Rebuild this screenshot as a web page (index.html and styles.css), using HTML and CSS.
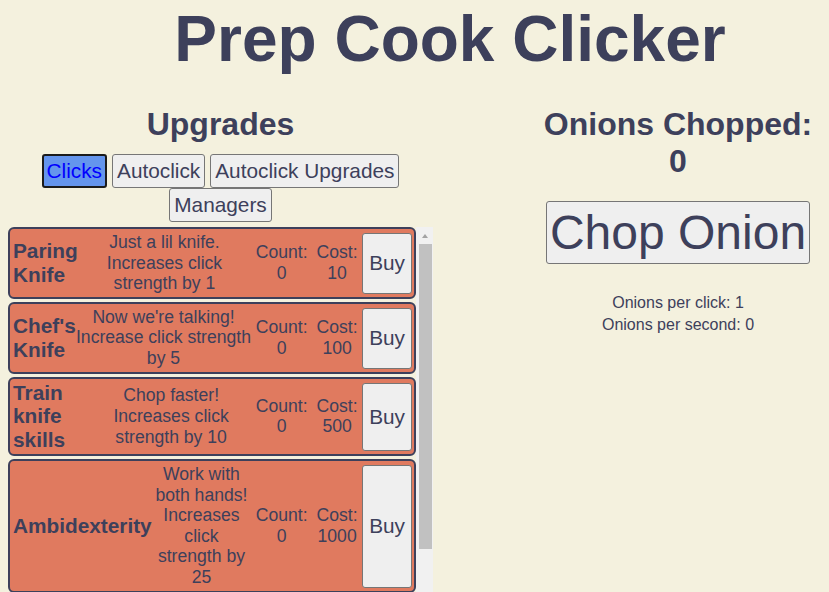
FILE: index.html
```html
<!DOCTYPE html>
<html lang="en">
<head>
<meta charset="utf-8">
<title>Prep Cook Clicker</title>
<link rel="stylesheet" href="styles.css">
</head>
<body>
<h1 class="title">Prep Cook Clicker</h1>
<main class="layout">
  <section class="upgrades">
    <h2 class="heading">Upgrades</h2>
    <nav class="tabs">
      <button class="tab tab-active">Clicks</button>
      <button class="tab">Autoclick</button>
      <button class="tab">Autoclick Upgrades</button>
      <button class="tab">Managers</button>
    </nav>
    <div class="upgrade-pane">
      <div class="upgrade-list">
        <div class="upgrade">
          <div class="upgrade-name">Paring Knife</div>
          <div class="upgrade-desc">Just a lil knife. Increases click strength by 1</div>
          <div class="upgrade-stat">Count:<br>0</div>
          <div class="upgrade-stat">Cost:<br>10</div>
          <button class="buy">Buy</button>
        </div>
        <div class="upgrade">
          <div class="upgrade-name">Chef's Knife</div>
          <div class="upgrade-desc">Now we're talking! Increase click strength by 5</div>
          <div class="upgrade-stat">Count:<br>0</div>
          <div class="upgrade-stat">Cost:<br>100</div>
          <button class="buy">Buy</button>
        </div>
        <div class="upgrade">
          <div class="upgrade-name">Train knife skills</div>
          <div class="upgrade-desc">Chop faster! Increases click strength by 10</div>
          <div class="upgrade-stat">Count:<br>0</div>
          <div class="upgrade-stat">Cost:<br>500</div>
          <button class="buy">Buy</button>
        </div>
        <div class="upgrade">
          <div class="upgrade-name">Ambidexterity</div>
          <div class="upgrade-desc">Work with both hands! Increases click strength by 25</div>
          <div class="upgrade-stat">Count:<br>0</div>
          <div class="upgrade-stat">Cost:<br>1000</div>
          <button class="buy">Buy</button>
        </div>
      </div>
      <div class="scrollbar" aria-hidden="true">
        <div class="scroll-arrow"><span class="scroll-arrow-glyph"></span></div>
        <div class="scroll-thumb"></div>
      </div>
    </div>
  </section>
  <section class="clicker">
    <h2 class="heading">Onions Chopped: 0</h2>
    <button class="chop">Chop Onion</button>
    <div class="rates">
      <p class="rate">Onions per click: 1</p>
      <p class="rate">Onions per second: 0</p>
    </div>
  </section>
</main>
</body>
</html>
```
FILE: styles.css
```css
body {
  margin: 0;
  background: #f4f1de;
  color: #3d405b;
  font-family: "Liberation Sans", Arial, sans-serif;
  overflow: hidden;
}

.title {
  margin: 2px 0 0;
  padding-left: 71px;
  text-align: center;
  font-size: 64px;
  font-weight: bold;
}

.layout {
  display: flex;
  align-items: flex-start;
  padding: 0 8px;
  margin-top: 30px;
}

.upgrades {
  width: 425px;
  flex: none;
}

.heading {
  margin: 0;
  font-size: 32px;
  font-weight: bold;
  text-align: center;
}

.tabs {
  display: flex;
  flex-wrap: wrap;
  justify-content: center;
  column-gap: 5px;
  margin-top: 11px;
}

.tab {
  font-family: inherit;
  font-size: 20.8px;
  line-height: normal;
  padding: 4px;
  border: 1px solid #767676;
  border-radius: 3px;
  background: #efefef;
  color: #3d405b;
}

.tab-active {
  background: #6495ed;
  color: #0000ff;
  border: 2px solid #1b1b1b;
  padding: 3px;
}

.upgrade-pane {
  display: flex;
  margin-top: 5px;
  height: 380px;
}

.upgrade-list {
  flex: 1;
  min-width: 0;
  overflow: hidden;
  display: flex;
  flex-direction: column;
  gap: 3px;
}

.scrollbar {
  flex: none;
  width: 17px;
  display: flex;
  flex-direction: column;
  background: #f1f1f1;
}

.scroll-arrow {
  height: 17px;
  display: flex;
  align-items: center;
  justify-content: center;
}

.scroll-arrow-glyph {
  width: 0;
  height: 0;
  border-left: 3.5px solid transparent;
  border-right: 3.5px solid transparent;
  border-bottom: 4px solid #a3a3a3;
}

.scroll-thumb {
  height: 305px;
  margin: 0 1px 0 3px;
  background: #c1c1c1;
}

.upgrade {
  flex: none;
  display: flex;
  align-items: center;
  padding: 2px 2px 2px 3px;
  border: 2px solid #3d405b;
  border-radius: 6px;
  background: #e07a5f;
}

.upgrade-name {
  font-size: 20.8px;
  line-height: 23.8px;
  font-weight: bold;
  text-align: left;
}

.upgrade-desc {
  font-size: 17.6px;
  line-height: 20.6px;
  text-align: center;
  padding: 1px 0;
}

.upgrade-stat {
  flex: none;
  font-size: 17.6px;
  line-height: 20.6px;
  text-align: center;
  padding: 0 4.5px;
}

.buy {
  flex: none;
  align-self: stretch;
  margin: 2px 0 1px;
  padding: 0 6px;
  font-family: inherit;
  font-size: 20.8px;
  border: 1px solid #767676;
  border-radius: 3px;
  background: #efefef;
  color: #3d405b;
}

.clicker {
  width: 270px;
  margin-left: 110px;
  flex: none;
  text-align: center;
}

.chop {
  display: block;
  margin: 21px auto 0;
  padding: 3px;
  font-family: inherit;
  font-size: 48px;
  line-height: normal;
  border: 1px solid #767676;
  border-radius: 3px;
  background: #efefef;
  color: #3d405b;
}

.rates {
  margin-top: 28px;
  font-size: 16px;
  line-height: 22px;
}

.rate {
  margin: 0;
}
```
